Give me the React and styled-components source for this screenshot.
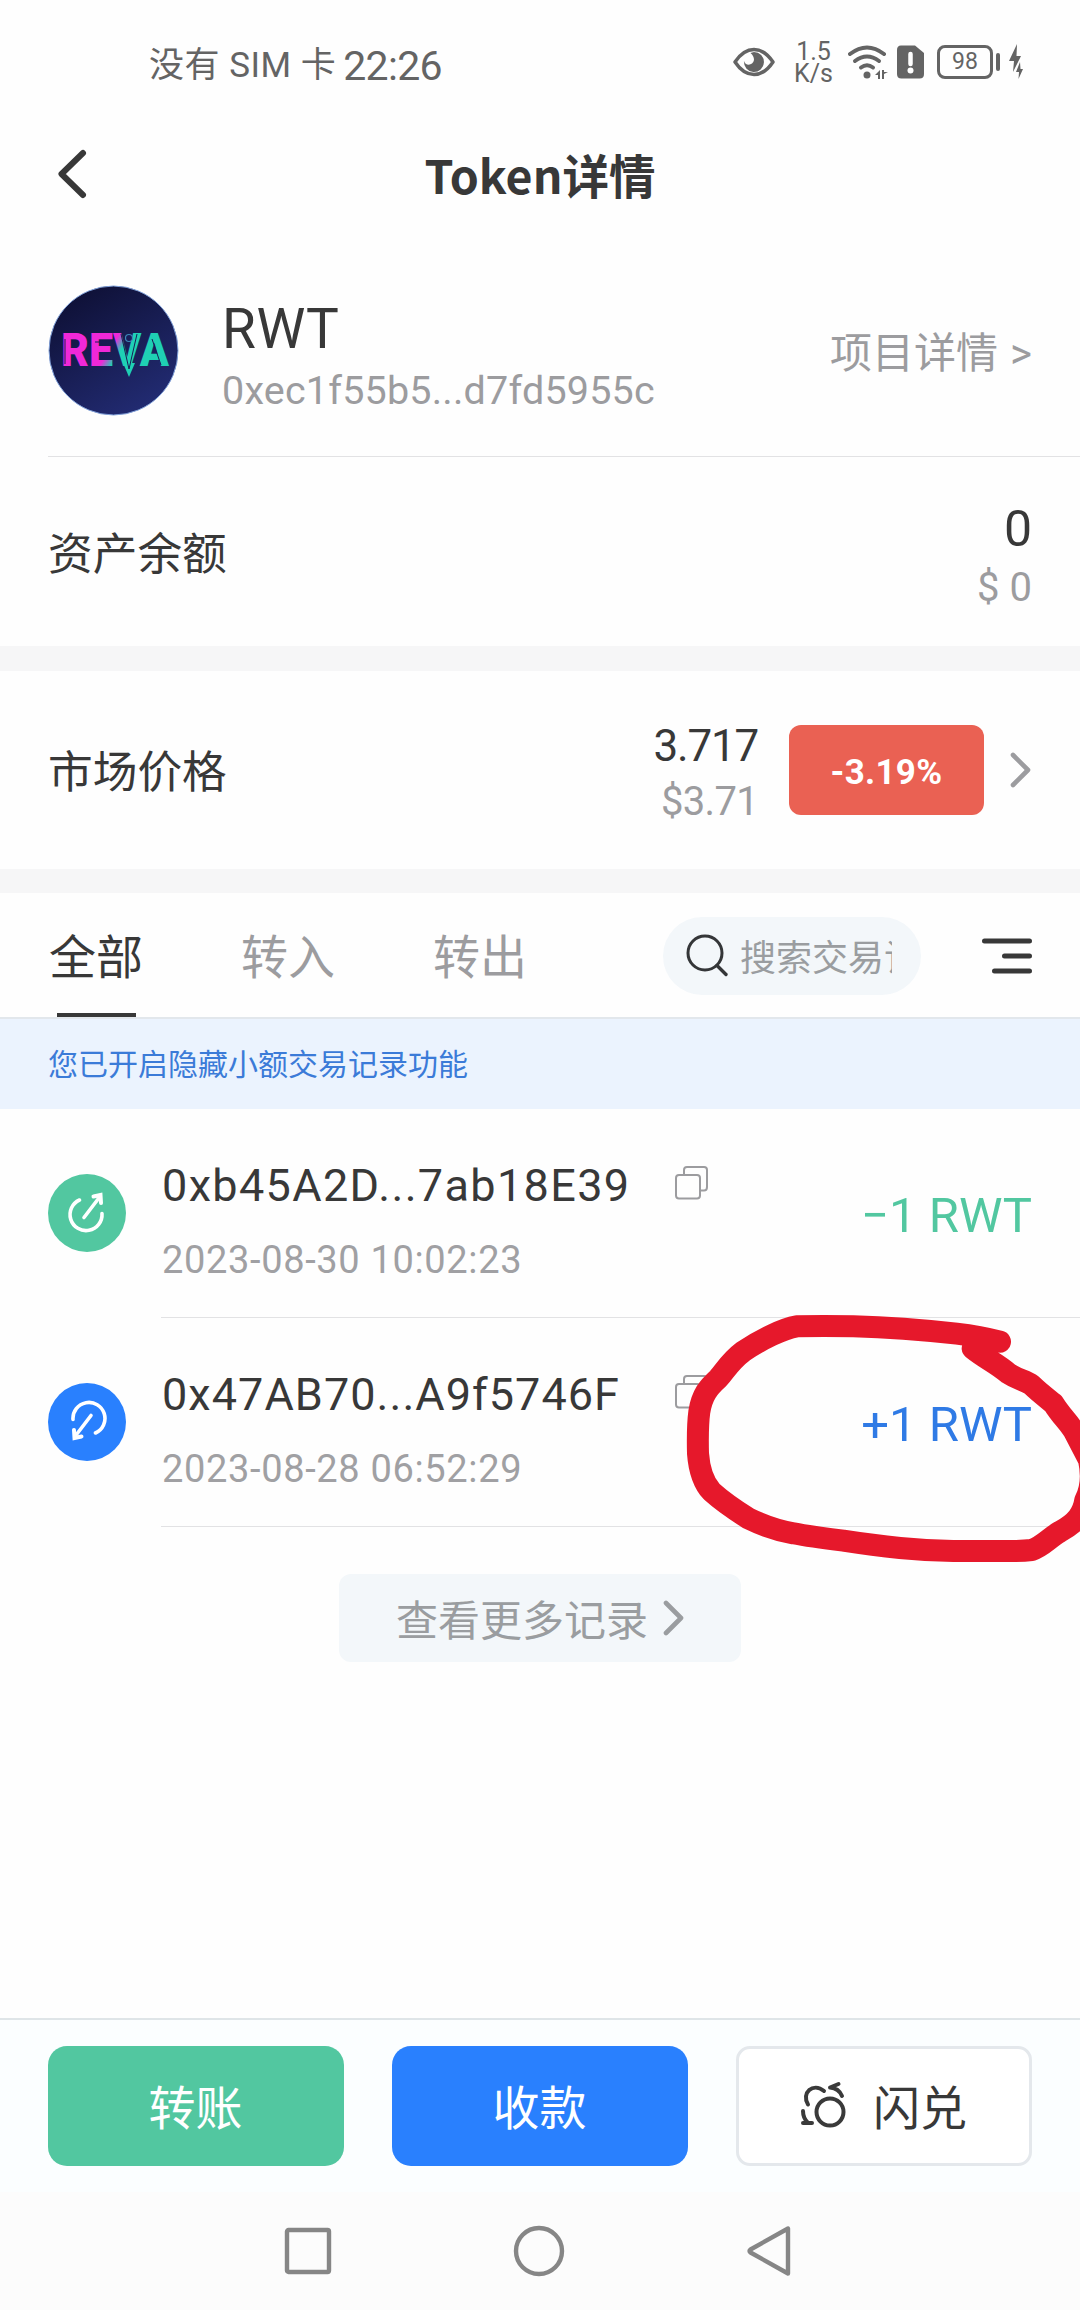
import React from 'react';
import styled, { createGlobalStyle } from 'styled-components';

const GlobalStyle = createGlobalStyle`
  * {
    box-sizing: border-box;
  }

  body {
    margin: 0;
    background: #fefefe;
    font-family: Roboto, 'Noto Sans CJK SC', sans-serif;
    color: #383838;
  }

  svg {
    display: block;
    flex-shrink: 0;
  }
`;

const Page = styled.div`
  display: flex;
  flex-direction: column;
  width: 1080px;
  height: 2310px;
  overflow: hidden;
  background: #fefefe;
`;

const StatusBar = styled.div`
  display: flex;
  justify-content: space-between;
  align-items: center;
  height: 126px;
  padding: 0 55px 0 149px;
  color: #646464;
`;

const StatusLeft = styled.div`
  display: flex;
  align-items: center;
  gap: 7px;
  padding-top: 5px;
  line-height: 40px;
`;

const Carrier = styled.span`
  font-size: 35px;
  letter-spacing: 0.5px;
`;

const Clock = styled.span`
  font-size: 41px;
  letter-spacing: -0.7px;
`;

const StatusIcons = styled.div`
  display: flex;
  align-items: center;
  margin-top: -3px;
`;

const NetSpeed = styled.div`
  width: 39px;
  margin: 2px 15px 0 19px;
  font-size: 25px;
  line-height: 22px;
  text-align: center;
`;

const SimSlot = styled.div`
  margin-left: 9px;
`;

const Battery = styled.div`
  display: flex;
  align-items: center;
  justify-content: center;
  width: 56px;
  height: 34px;
  margin-left: 13px;
  border: 3px solid #646464;
  border-radius: 8px;
  font-size: 23px;
  line-height: 28px;
`;

const BatteryCap = styled.div`
  width: 4px;
  height: 18px;
  margin: 0 9px 0 3px;
  border-radius: 2px;
  background: #646464;
`;

const Header = styled.header`
  display: grid;
  grid-template-columns: 200px 1fr 200px;
  align-items: center;
  height: 98px;
  padding: 0 0 2px;
`;

const BackButton = styled.button`
  display: flex;
  padding: 0 0 0 56px;
  border: none;
  background: none;
`;

const Title = styled.h1`
  margin: 0;
  font-family: 'Noto Sans CJK SC', sans-serif;
  font-size: 46.5px;
  font-weight: 700;
  line-height: 58px;
  text-align: center;
`;

const TokenInfo = styled.section`
  display: flex;
  align-items: center;
  height: 233px;
  margin-left: 48px;
  padding: 21px 48px 0 0;
  border-bottom: 1px solid #e2e2e4;
`;

const TokenName = styled.div`
  flex: 1;
  margin-left: 43px;
  padding-top: 17px;
`;

const Symbol = styled.div`
  font-size: 55px;
  line-height: 64px;
  letter-spacing: 0.5px;
`;

const Contract = styled.div`
  font-size: 39.5px;
  line-height: 60px;
  letter-spacing: 0.2px;
  color: #9c9c9f;
`;

const ProjectLink = styled.a`
  padding-top: 6px;
  font-size: 42px;
  line-height: 56px;
  word-spacing: 1.5px;
  color: #9c9c9f;
`;

const InfoRow = styled.section`
  display: flex;
  align-items: center;
  height: ${props => props.$height}px;
  padding: 0 48px;
`;

const RowLabel = styled.div`
  flex: 1;
  padding-top: 6px;
  font-size: 44.7px;
  line-height: 60px;
`;

const Amounts = styled.div`
  display: flex;
  flex-direction: column;
  align-items: flex-end;
  gap: ${props => props.$gap || 0}px;
  padding-top: ${props => props.$top}px;
`;

const AmountMain = styled.div`
  font-size: ${props => props.$size}px;
  line-height: 56px;
  letter-spacing: ${props => props.$spacing || 0}px;
`;

const AmountSub = styled.div`
  font-size: 40px;
  line-height: 56px;
  letter-spacing: ${props => props.$spacing || 0}px;
  color: #9c9c9f;
`;

const ChangeBadge = styled.div`
  width: 195px;
  height: 90px;
  margin: 0 26px 0 31px;
  padding-top: 3px;
  border-radius: 12px;
  background: #ea6153;
  color: #fff;
  font-size: 35px;
  font-weight: 700;
  line-height: 90px;
  letter-spacing: 0.3px;
  text-align: center;
`;

const Band = styled.div`
  height: ${props => props.$height}px;
  background: #f6f6f7;
`;

const Toolbar = styled.nav`
  display: flex;
  height: 126px;
  padding: 0 48px;
  border-bottom: 2px solid #e2e7ec;
`;

const Tab = styled.button`
  display: flex;
  flex-direction: column;
  align-items: center;
  width: 96px;
  margin-right: 96px;
  padding: 32px 0 0;
  border: none;
  background: none;
  font-family: inherit;
  font-size: 47px;
  line-height: 66px;
  color: ${props => (props.$active ? '#383838' : '#9c9c9f')};

  &::after {
    content: '';
    width: 79px;
    height: 4px;
    margin-top: 22px;
    background: ${props => (props.$active ? '#383838' : 'transparent')};
  }
`;

const SearchBox = styled.div`
  display: flex;
  align-items: center;
  width: 258px;
  height: 78px;
  margin: 24px 61px 0 39px;
  padding-left: 23px;
  border-radius: 39px;
  background: #f3f7fa;
`;

const SearchText = styled.div`
  width: 152px;
  margin-left: 11px;
  padding-top: 6px;
  overflow: hidden;
  white-space: nowrap;
  font-size: 36px;
  line-height: 50px;
  color: #9a9da0;
`;

const MenuIcon = styled.svg`
  margin-top: 45px;
`;

const Notice = styled.div`
  height: 90px;
  padding-left: 48px;
  background: #ebf3fe;
  color: #3b7bd8;
  font-size: 30px;
  line-height: 92px;
`;

const Records = styled.section`
  position: relative;
`;

const Record = styled.div`
  display: flex;
  align-items: center;
  height: 209px;
  padding-left: 48px;
`;

const Direction = styled.div`
  display: flex;
  align-items: center;
  justify-content: center;
  width: 78px;
  height: 78px;
  margin-bottom: 2px;
  border-radius: 50%;
  background: ${props => (props.$out ? '#52c7a0' : '#2980fe')};
`;

const RecordBody = styled.div`
  display: flex;
  flex: 1;
  height: 209px;
  margin-left: 35px;
  padding: 47px 48px 0 0;
  border-bottom: 1px solid #e2e2e4;
`;

const RecordText = styled.div`
  width: 513px;
  margin-left: 1px;
`;

const RecordAddress = styled.div`
  font-size: 45px;
  line-height: 60px;
  letter-spacing: ${props => props.$spacing}px;
`;

const RecordTime = styled.div`
  margin-top: 15px;
  font-size: 38px;
  line-height: 58px;
  letter-spacing: 0.65px;
  color: #a0a0a3;
`;

const CopyIcon = styled.svg`
  margin-top: 9px;
`;

const RecordAmount = styled.div`
  flex: 1;
  padding-top: 30px;
  font-size: 49px;
  line-height: 60px;
  text-align: right;
  color: ${props => (props.$out ? '#52c7a0' : '#2f7ae5')};
`;

const Scribble = styled.svg`
  position: absolute;
  top: 181px;
  right: 0;
`;

const MoreButton = styled.button`
  display: flex;
  align-items: center;
  align-self: center;
  width: 402px;
  height: 88px;
  margin-top: 47px;
  padding: 0 0 1px 57px;
  gap: 15px;
  border: none;
  border-radius: 12px;
  background: #f3f7fa;
  font-family: inherit;
  font-size: 42px;
  color: #9a9da0;
`;

const ActionBar = styled.footer`
  display: flex;
  justify-content: space-between;
  height: 174px;
  margin-top: auto;
  padding: 26px 48px 0;
  border-top: 2px solid #dfe5e8;
  background: #fbfeff;
`;

const ActionButton = styled.button`
  display: flex;
  align-items: center;
  justify-content: center;
  gap: 27px;
  width: 296px;
  height: 120px;
  padding: 0 1px 3px 0;
  border: ${props => (props.$outlined ? '3px solid #e4e8ec' : 'none')};
  border-radius: ${props => (props.$outlined ? 14 : 19)}px;
  background: ${props => props.$color};
  color: ${props => (props.$outlined ? '#383838' : '#fff')};
  font-family: inherit;
  font-size: 47px;
`;

const SystemNav = styled.div`
  display: flex;
  align-items: center;
  justify-content: center;
  gap: 181px;
  height: 118px;
  padding-right: 4px;
  background: #fcfcfc;
`;

const records = [
  {
    out: true,
    address: '0xb45A2D...7ab18E39',
    spacing: 1.35,
    time: '2023-08-30 10:02:23',
    amount: '−1 RWT',
  },
  {
    out: false,
    address: '0x47AB70...A9f5746F',
    spacing: 1.05,
    time: '2023-08-28 06:52:29',
    amount: '+1 RWT',
  },
];

function EyeIcon() {
  return (
    <svg width="42" height="30" viewBox="0 0 42 30">
      <path d="M2 15C8 6 14 2.5 21 2.5S34 6 40 15C34 24 28 27.5 21 27.5S8 24 2 15Z" fill="none" stroke="#646464" strokeWidth="3.5" strokeLinejoin="round" />
      <path d="M21 5A10 10 0 1 1 11 14C12 19 20 19 21 13Q21 9 17.5 6Z" fill="#646464" />
    </svg>
  );
}

function WifiIcon() {
  return (
    <svg width="40" height="34" viewBox="0 0 40 34">
      <g fill="none" stroke="#646464" strokeWidth="4" strokeLinecap="round">
        <path d="M2 9Q19-4 36 9" />
        <path d="M7 16Q19 7 31 16" />
        <path d="M13 22.5Q19 18 25 22.5" />
      </g>
      <circle cx="19" cy="30" r="3.5" fill="#646464" />
      <path d="M32 25v9h-2v-4h-3zM34 25v9h2v-5l4-2h-4v-2z" fill="#646464" />
    </svg>
  );
}

function SimIcon() {
  return (
    <svg width="27" height="34" viewBox="0 0 27 34">
      <path d="M4 0.5H18L27 8V29Q27 33.5 22.5 33.5H4.5Q0 33.5 0 29V5Q0 0.5 4 0.5Z" fill="#646464" />
      <path d="M13.5 9V19" stroke="#fff" strokeWidth="4.5" strokeLinecap="round" />
      <circle cx="13.5" cy="25.5" r="3" fill="#fff" />
    </svg>
  );
}

function BoltIcon() {
  return (
    <svg width="16" height="36" viewBox="0 0 16 36">
      <path d="M8 0L0 17H5L4 28L12 12H7.5ZM11 18L7 28H10L9.5 35L14 25H11.5Z" fill="#646464" />
    </svg>
  );
}

function Chevron({ color = '#9c9c9f' }) {
  return (
    <svg width="22" height="38" viewBox="0 0 22 38">
      <path d="M3 4L18 19L3 34" fill="none" stroke={color} strokeWidth="4.6" strokeLinecap="round" strokeLinejoin="round" />
    </svg>
  );
}

function TokenLogo() {
  return (
    <svg width="131" height="131" viewBox="0 0 131 131">
      <defs>
        <linearGradient id="disc" x1="0" y1="0" x2="0.6" y2="1">
          <stop offset="0" stopColor="#0c0d2e" />
          <stop offset="1" stopColor="#212a70" />
        </linearGradient>
        <linearGradient id="brand" gradientUnits="userSpaceOnUse" x1="55" y1="52" x2="84" y2="70">
          <stop offset="0.35" stopColor="#f028d8" />
          <stop offset="0.65" stopColor="#1fd0b4" />
        </linearGradient>
      </defs>
      <circle cx="65.5" cy="65.5" r="64.5" fill="url(#disc)" stroke="#7f9fd8" strokeWidth="1" />
      <text x="13" y="81" fontFamily="Roboto, sans-serif" fontSize="46" fontWeight="900" textLength="108" lengthAdjust="spacingAndGlyphs" fill="url(#brand)">REVA</text>
      <path d="M75 78L81 92L87 78Z" fill="#1fd0b4" />
      <path d="M73 49L81 84L89 49M17 54V79M47 57H57M104 54L113 80" fill="none" stroke="#191c58" strokeWidth="1" />
      <circle cx="81" cy="53" r="3.5" fill="#191c58" stroke="#3c88b8" strokeWidth="1.2" />
    </svg>
  );
}

function DirectionIcon({ out }) {
  return (
    <svg width="44" height="44" viewBox="0 0 44 44">
      <g transform={out ? undefined : 'rotate(180 22.5 21)'} fill="none" stroke="#fff" strokeWidth="3.6" strokeLinecap="round" strokeLinejoin="round">
        <path d="M14.5 9A16 16 0 1 0 37 22.5" />
        <path d="M19 26.5L33.5 7.5" />
        <path d="M28.5 5.5L35.5 4L36 12" strokeWidth="4" strokeLinejoin="miter" />
      </g>
    </svg>
  );
}

function SwapIcon() {
  return (
    <svg width="46" height="48" viewBox="0 0 46 48">
      <g fill="none" stroke="#3a3a3a" strokeWidth="4" strokeLinecap="round" strokeLinejoin="round">
        <circle cx="30" cy="31" r="13.5" />
        <path d="M8 23.5C1 12 13 1 24 10" />
        <path d="M38.5 3L30 6.5C36 7 40 10 42 15" />
        <path d="M3 30C3 36 5 39 8 42M3 42H12" />
      </g>
    </svg>
  );
}

function App() {
  return (
    <>
      <GlobalStyle />
      <Page>
        <StatusBar>
          <StatusLeft>
            <Carrier>没有 SIM 卡</Carrier>
            <Clock>22:26</Clock>
          </StatusLeft>
          <StatusIcons>
            <EyeIcon />
            <NetSpeed>1.5 K/s</NetSpeed>
            <WifiIcon />
            <SimSlot>
              <SimIcon />
            </SimSlot>
            <Battery>98</Battery>
            <BatteryCap />
            <BoltIcon />
          </StatusIcons>
        </StatusBar>

        <Header>
          <BackButton>
            <svg width="34" height="52" viewBox="0 0 34 52">
              <path d="M27 5L5.5 26L27 47" fill="none" stroke="#383838" strokeWidth="6" strokeLinecap="round" strokeLinejoin="round" />
            </svg>
          </BackButton>
          <Title>Token详情</Title>
        </Header>

        <TokenInfo>
          <TokenLogo />
          <TokenName>
            <Symbol>RWT</Symbol>
            <Contract>0xec1f55b5...d7fd5955c</Contract>
          </TokenName>
          <ProjectLink>项目详情 &gt;</ProjectLink>
        </TokenInfo>

        <InfoRow $height={189}>
          <RowLabel>资产余额</RowLabel>
          <Amounts $top={13} $gap={3}>
            <AmountMain $size={50}>0</AmountMain>
            <AmountSub>$ 0</AmountSub>
          </Amounts>
        </InfoRow>
        <Band $height={25} />
        <InfoRow $height={198}>
          <RowLabel>市场价格</RowLabel>
          <Amounts $top={8}>
            <AmountMain $size={44} $spacing={-1.2}>3.717</AmountMain>
            <AmountSub $spacing={-0.7}>$3.71</AmountSub>
          </Amounts>
          <ChangeBadge>-3.19%</ChangeBadge>
          <Chevron />
        </InfoRow>
        <Band $height={24} />

        <Toolbar>
          <Tab $active>全部</Tab>
          <Tab>转入</Tab>
          <Tab>转出</Tab>
          <SearchBox>
            <svg width="43" height="44" viewBox="0 0 43 44">
              <circle cx="19" cy="19" r="17" fill="none" stroke="#343638" strokeWidth="3" />
              <path d="M31 31.5L40 40.5" stroke="#343638" strokeWidth="3.4" strokeLinecap="round" />
            </svg>
            <SearchText>搜索交易记录</SearchText>
          </SearchBox>
          <MenuIcon width="50" height="36" viewBox="0 0 50 36">
            <path d="M2.5 3H47.5M22.5 18H47.5M12.5 33H47.5" stroke="#383838" strokeWidth="5" strokeLinecap="round" />
          </MenuIcon>
        </Toolbar>
        <Notice>您已开启隐藏小额交易记录功能</Notice>

        <Records>
          {records.map((record) => (
            <Record key={record.time}>
              <Direction $out={record.out}>
                <DirectionIcon out={record.out} />
              </Direction>
              <RecordBody>
                <RecordText>
                  <RecordAddress $spacing={record.spacing}>{record.address}</RecordAddress>
                  <RecordTime>{record.time}</RecordTime>
                </RecordText>
                <CopyIcon width="34" height="35" viewBox="0 0 34 35">
                  <path d="M9 9V5Q9 2 12 2H29Q32 2 32 5V22Q32 25.5 29 25.5H25" fill="none" stroke="#9c9c9f" strokeWidth="2" />
                  <rect x="1" y="10" width="24" height="23.5" rx="3" fill="none" stroke="#9c9c9f" strokeWidth="2" />
                </CopyIcon>
                <RecordAmount $out={record.out}>{record.amount}</RecordAmount>
              </RecordBody>
            </Record>
          ))}
          <Scribble width="440" height="290" viewBox="0 0 1320 870">
            <path
              d="M1080 155Q1020 139 950 131C820 117 740 112 640 109Q550 107 470 109C430 116 365 147 310 184C270 214 257 240 235 265C205 292 186 315 178 365C172 410 173 450 174 490C178 545 192 580 215 605C245 632 280 657 325 685C370 707 420 723 460 730C510 740 560 746 610 752Q700 766 780 774Q860 782 940 783H1110Q1150 783 1175 780C1210 768 1225 745 1260 725C1310 698 1330 670 1336 630Q1362 580 1347 510L1303 425C1285 395 1265 380 1240 340C1215 320 1195 305 1175 285C1155 270 1135 270 1105 250C1070 220 1035 205 998 175"
              fill="none"
              stroke="#e6182b"
              strokeWidth="66"
              strokeLinecap="round"
              strokeLinejoin="round"
            />
          </Scribble>
        </Records>

        <MoreButton>
          查看更多记录
          <Chevron color="#9a9da0" />
        </MoreButton>

        <ActionBar>
          <ActionButton $color="#52c7a0">转账</ActionButton>
          <ActionButton $color="#2980fe">收款</ActionButton>
          <ActionButton $color="#fff" $outlined>
            <SwapIcon />
            闪兑
          </ActionButton>
        </ActionBar>

        <SystemNav>
          <svg width="48" height="48" viewBox="0 0 48 48">
            <rect x="3" y="3" width="42" height="42" rx="1.5" fill="none" stroke="#868686" strokeWidth="4.4" />
          </svg>
          <svg width="52" height="52" viewBox="0 0 52 52">
            <circle cx="26" cy="26" r="23" fill="none" stroke="#868686" strokeWidth="4.4" />
          </svg>
          <svg width="46" height="52" viewBox="0 0 46 52">
            <path d="M42 3.5V48.5L4.5 27.5Q2.5 26 4.5 24.5Z" fill="none" stroke="#868686" strokeWidth="4.4" strokeLinejoin="round" />
          </svg>
        </SystemNav>
      </Page>
    </>
  );
}

export default App;
